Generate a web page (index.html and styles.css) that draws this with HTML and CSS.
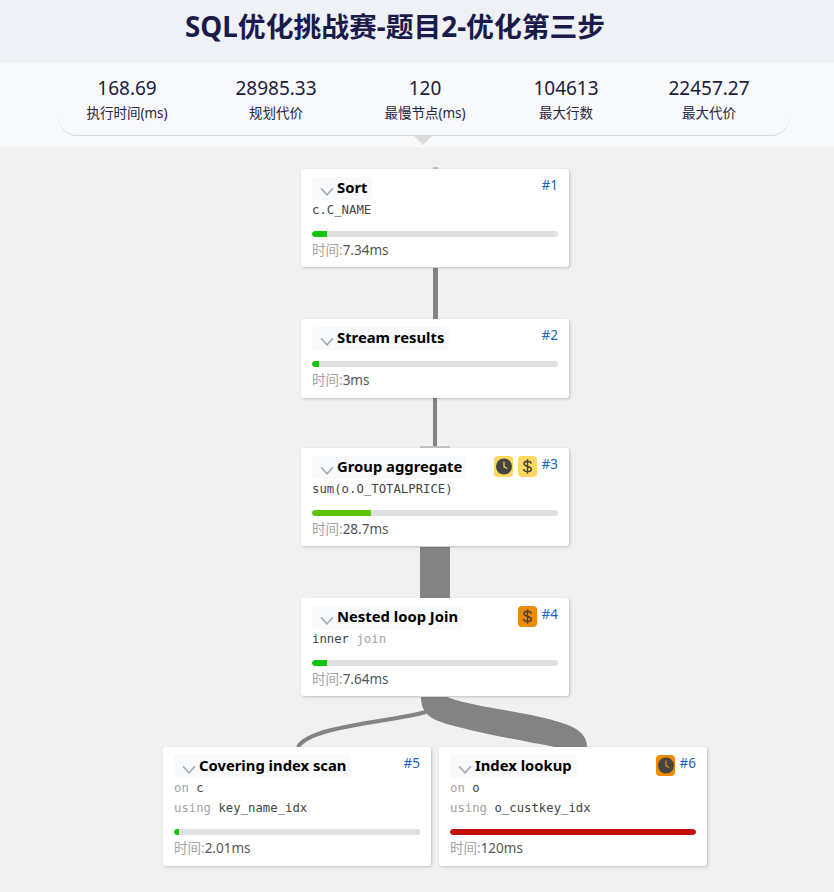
FILE: index.html
```html
<!DOCTYPE html>
<html lang="zh">
<head>
<meta charset="utf-8">
<title>SQL优化挑战赛</title>
<link rel="stylesheet" href="styles.css">
</head>
<body>
<svg width="0" height="0" class="defs">
  <symbol id="chev" viewBox="0 0 14 9"><path d="M1 1.200 7 7.800l6-6.600" fill="none" stroke="#a9abad" stroke-width="1.700"/></symbol>
  <symbol id="clock" viewBox="0 0 19 19"><circle cx="10" cy="10.500" r="8" fill="#444"/><path d="M10 5.500v5.300l3.200 1.800" fill="none" stroke="currentColor" stroke-width="1.200"/></symbol>
  <symbol id="dollar" viewBox="0 0 19 19"><path d="M13.200 7.700C13 6 11.600 5.300 9.500 5.300 7.500 5.300 6 6.200 6 7.800c0 3.400 7.400 1.800 7.400 5.300 0 1.700-1.700 2.500-3.900 2.500-2.200 0-3.700-.8-3.900-2.600M9.500 3.200v14.600" fill="none" stroke="#444" stroke-width="1.500"/></symbol>
</svg>
<header class="top"><h1 class="title">SQL优化挑战赛-题目2-优化第三步</h1></header>
<section class="band">
  <div class="panel">
    <div class="stat s1"><div class="num">168.69</div><div class="lab">执行时间(ms)</div></div>
    <div class="stat s2"><div class="num">28985.33</div><div class="lab">规划代价</div></div>
    <div class="stat s3"><div class="num">120</div><div class="lab">最慢节点(ms)</div></div>
    <div class="stat s4"><div class="num">104613</div><div class="lab">最大行数</div></div>
    <div class="stat s5"><div class="num">22457.27</div><div class="lab">最大代价</div></div>
  </div>
  <div class="arrow"></div>
</section>
<main class="canvas">
  <svg class="edges" width="834" height="745" viewBox="0 147 834 745">
    <rect x="433" y="167" width="5" height="3" fill="#c4c4c4"/>
    <rect x="433" y="268" width="5" height="51" fill="#838383"/>
    <rect x="433" y="398" width="4" height="50" fill="#838383"/>
    <rect x="420" y="446" width="30" height="3" fill="#c4c4c4"/>
    <rect x="420" y="547" width="30" height="51" fill="#838383"/>
    <path d="M426 712C390 722 310 726 298 747" fill="none" stroke="#838383" stroke-width="4"/>
    <path d="M421 697C421 720 440 722 470 730C500 737 530 742 555 747H587C587 730 570 724 540 717C510 710 470 706 447 697Z" fill="#838383"/>
  </svg>

  <article class="node n1">
    <div class="head"><span class="name"><svg class="chev"><use href="#chev"/></svg>Sort</span><span class="side"><a class="id">#1</a></span></div>
    <div class="code">c.C_NAME</div>
    <div class="bar b-top"><i class="fill f-g" style="width:6%"></i></div>
    <div class="time"><span class="muted">时间:</span>7.34ms</div>
  </article>

  <article class="node n2">
    <div class="head"><span class="name"><svg class="chev"><use href="#chev"/></svg>Stream results</span><span class="side"><a class="id">#2</a></span></div>
    <div class="bar b-top2"><i class="fill f-g" style="width:3%"></i></div>
    <div class="time"><span class="muted">时间:</span>3ms</div>
  </article>

  <article class="node n3">
    <div class="head"><span class="name"><svg class="chev"><use href="#chev"/></svg>Group aggregate</span><span class="side"><span class="badge yellow"><svg><use href="#clock"/></svg></span><span class="badge yellow"><svg><use href="#dollar"/></svg></span><a class="id">#3</a></span></div>
    <div class="code">sum(o.O_TOTALPRICE)</div>
    <div class="bar b-top"><i class="fill f-l" style="width:24%"></i></div>
    <div class="time"><span class="muted">时间:</span>28.7ms</div>
  </article>

  <article class="node n4">
    <div class="head"><span class="name"><svg class="chev"><use href="#chev"/></svg>Nested loop Join</span><span class="side"><span class="badge orange"><svg><use href="#dollar"/></svg></span><a class="id">#4</a></span></div>
    <div class="code">inner <span class="muted">join</span></div>
    <div class="bar b-top"><i class="fill f-g" style="width:6%"></i></div>
    <div class="time"><span class="muted">时间:</span>7.64ms</div>
  </article>

  <article class="node n5">
    <div class="head"><span class="name"><svg class="chev"><use href="#chev"/></svg>Covering index scan</span><span class="side"><a class="id">#5</a></span></div>
    <div class="code"><span class="muted">on</span> c</div>
    <div class="code c2"><span class="muted">using</span> key_name_idx</div>
    <div class="bar b-top"><i class="fill f-g" style="width:2%"></i></div>
    <div class="time"><span class="muted">时间:</span>2.01ms</div>
  </article>

  <article class="node n6">
    <div class="head"><span class="name"><svg class="chev"><use href="#chev"/></svg>Index lookup</span><span class="side"><span class="badge orange"><svg><use href="#clock"/></svg></span><a class="id">#6</a></span></div>
    <div class="code"><span class="muted">on</span> o</div>
    <div class="code c2"><span class="muted">using</span> o_custkey_idx</div>
    <div class="bar b-top"><i class="fill f-r" style="width:100%"></i></div>
    <div class="time"><span class="muted">时间:</span>120ms</div>
  </article>
</main>
</body>
</html>
```
FILE: styles.css
```css
* { box-sizing: border-box; }
html, body { margin: 0; padding: 0; }
body {
  width: 834px;
  height: 892px;
  overflow: hidden;
  background: #f1f1f1;
  font-family: "Noto Sans", "Noto Sans CJK SC", sans-serif;
  color: #1a1a3c;
}
.defs { position: absolute; }
.top {
  height: 63px;
  background: #eef1f5;
  padding: 8px 0 0 185px;
}
.title {
  margin: 0;
  font-size: 27.800px;
  line-height: 36px;
  font-weight: 700;
  color: #1b1b4b;
  white-space: nowrap;
}
.band {
  position: relative;
  height: 84px;
  background: #f7f9fb;
  padding: 0 45px 0 59px;
}
.panel {
  position: relative;
  height: 73px;
  width: 730px;
  border-bottom: 1px solid #d8dbde;
  border-radius: 0 0 18px 18px;
}
.stat {
  position: absolute;
  top: 13px;
  width: 120px;
  text-align: center;
}
.s1 { left: 8px; }
.s2 { left: 157px; }
.s3 { left: 306px; }
.s4 { left: 447px; }
.s5 { left: 590px; }
.num { font-size: 19px; line-height: 25px; color: #1b1b3f; }
.lab { font-size: 13.500px; line-height: 24px; color: #24243f; }
.arrow {
  position: absolute;
  left: 414px;
  top: 73px;
  border-left: 9px solid transparent;
  border-right: 9px solid transparent;
  border-top: 9px solid #dcdcdc;
}
.canvas { position: relative; height: 745px; }
.edges { position: absolute; left: 0; top: 0; }
.node {
  position: absolute;
  width: 268px;
  background: #fff;
  border-radius: 3px;
  box-shadow: 1px 1px 3px rgba(0, 0, 0, .2);
  padding: 8px 11px 0 11px;
}
.n1 { left: 301px; top: 22px; height: 98px; }
.n2 { left: 301px; top: 172px; height: 79px; }
.n3 { left: 301px; top: 301px; height: 98px; }
.n4 { left: 301px; top: 451px; height: 98px; }
.n5 { left: 163px; top: 600px; height: 119px; }
.n6 { left: 439px; top: 600px; height: 119px; }
.head {
  display: flex;
  justify-content: space-between;
  align-items: flex-start;
  height: 23px;
}
.name {
  display: inline-flex;
  align-items: center;
  height: 23px;
  padding: 0 5px 3px 8px;
  background: #f7f9fb;
  border-radius: 4px;
  font-size: 14.800px;
  font-weight: 700;
  color: #000;
  white-space: nowrap;
}
.chev { width: 14px; height: 9px; margin: 8px 3px 0 0; }
.side { display: flex; align-items: flex-start; gap: 5px; }
.badge {
  display: block;
  width: 19px;
  height: 21px;
  border-radius: 4px;
  padding: 0;
}
.badge svg { display: block; width: 19px; height: 19px; }
.yellow { background: #ffd75f; color: #ffd75f; }
.orange { background: #f08a00; color: #f08a00; }
.id { font-size: 13.500px; line-height: 16px; color: #1565c0; }
.code {
  margin-top: 2px;
  font-family: "DejaVu Sans Mono", "Liberation Mono", monospace;
  font-size: 12.300px;
  line-height: 17px;
  color: #444;
}
.c2 { margin-top: 3px; }
.muted { color: #a3a3a3; }
.bar {
  height: 6px;
  background: #e0e0e0;
  border-radius: 3px;
  overflow: hidden;
}
.b-top { margin-top: 12px; }
.b-top2 { margin-top: 11px; }
.fill { display: block; height: 100%; border-radius: 3px 0 0 3px; }
.f-g { background: #13c40f; }
.f-l { background: #5dc30b; }
.f-r { background: #c20e0e; border-radius: 3px; }
.time { margin-top: 3px; font-size: 13.500px; line-height: 20px; color: #555; }
```
